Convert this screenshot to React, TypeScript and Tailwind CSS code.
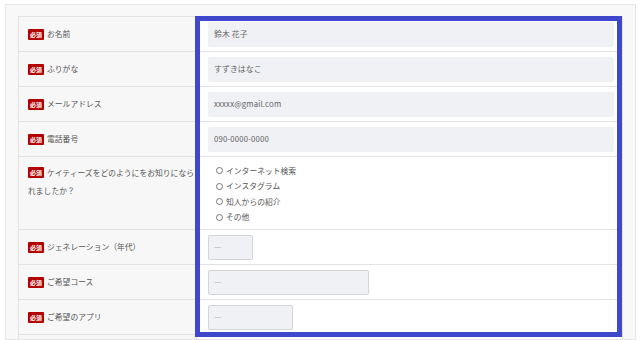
import React from 'react';

const font = { fontFamily: '"Noto Sans CJK JP", "Liberation Sans", sans-serif' };

const textRows = [
  { label: 'お名前', value: '鈴木 花子' },
  { label: 'ふりがな', value: 'すずきはなこ' },
  { label: 'メールアドレス', value: 'xxxxx@gmail.com' },
  { label: '電話番号', value: '090-0000-0000' },
];

const sources = ['インターネット検索', 'インスタグラム', '知人からの紹介', 'その他'];

const Badge = () => (
  <span className="inline-block align-middle bg-[#b30000] text-white text-[6px] leading-[11px] font-bold px-[2px] mr-[3px] rounded-[1px]">
    必須
  </span>
);

const Label = ({ children }: { children: React.ReactNode }) => (
  <div className="w-[178px] shrink-0 bg-[#f7f7f7] border-r border-[#e3e3e3] pl-[9px] flex items-center text-[7.8px] text-[#555]">
    <div className="flex items-center">
      <Badge />
      <span>{children}</span>
    </div>
  </div>
);

const SelectBox = ({ width }: { width: string }) => (
  <div className={`${width} h-[25px] bg-[#f0f1f4] border border-[#d2d4d8] rounded-[2px] flex items-center pl-[5px] text-[8px] text-[#a9adb8]`}>
    —
  </div>
);

export default function App() {
  return (
    <div className="h-[340px] overflow-hidden bg-white pl-[5px] pr-[4px] pt-[4px]" style={font}>
      <div className="h-full border border-[#e6e6e6] bg-[#f8f8f8] pl-[12px] pr-[12px] pt-[11px] overflow-hidden">
        <div className="relative">
          <div className="border-t border-l border-r border-[#e3e3e3] bg-white">
            {textRows.map((r) => (
              <div key={r.label} className="flex h-[35px] border-b border-[#e3e3e3]">
                <Label>{r.label}</Label>
                <div className="flex-1 flex items-center pl-[11px] pr-[8px]">
                  <div className="w-full h-[25px] bg-[#f0f1f4] rounded-[2px] flex items-center pl-[6px] text-[7.8px] tracking-[0.02em] text-[#666]">
                    {r.value}
                  </div>
                </div>
              </div>
            ))}

            <div className="flex h-[73px] border-b border-[#e3e3e3]">
              <div className="w-[178px] shrink-0 bg-[#f7f7f7] border-r border-[#e3e3e3] pl-[9px] pt-[6px] text-[7.8px] leading-[17px] text-[#555]">
                <Badge />
                <span className="align-middle">ケイティーズをどのようにをお知りになられましたか？</span>
              </div>
              <div className="flex-1 pl-[19px] pt-[6px] text-[7.8px] text-[#555]">
                {sources.map((s) => (
                  <div key={s} className="flex items-center gap-[3px] h-[15.5px]">
                    <span className="w-[7px] h-[7px] rounded-full border border-[#777] bg-white" />
                    {s}
                  </div>
                ))}
              </div>
            </div>

            <div className="flex h-[35px] border-b border-[#e3e3e3]">
              <Label>ジェネレーション（年代）</Label>
              <div className="flex-1 flex items-center pl-[11px]">
                <SelectBox width="w-[45px]" />
              </div>
            </div>
            <div className="flex h-[35px] border-b border-[#e3e3e3]">
              <Label>ご希望コース</Label>
              <div className="flex-1 flex items-center pl-[11px]">
                <SelectBox width="w-[161px]" />
              </div>
            </div>
            <div className="flex h-[35px] border-b border-[#e3e3e3]">
              <Label>ご希望のアプリ</Label>
              <div className="flex-1 flex items-center pl-[11px]">
                <SelectBox width="w-[85px]" />
              </div>
            </div>
            <div className="flex h-[35px] border-b border-[#e3e3e3]">
              <div className="w-[178px] shrink-0 bg-[#f7f7f7] border-r border-[#e3e3e3]" />
              <div className="flex-1" />
            </div>
          </div>

          {/* annotation box */}
          <div className="absolute left-[177px] top-0 w-[427px] h-[321px] border-[5px] border-[#3f48cc] pointer-events-none" />
        </div>
      </div>
    </div>
  );
}
